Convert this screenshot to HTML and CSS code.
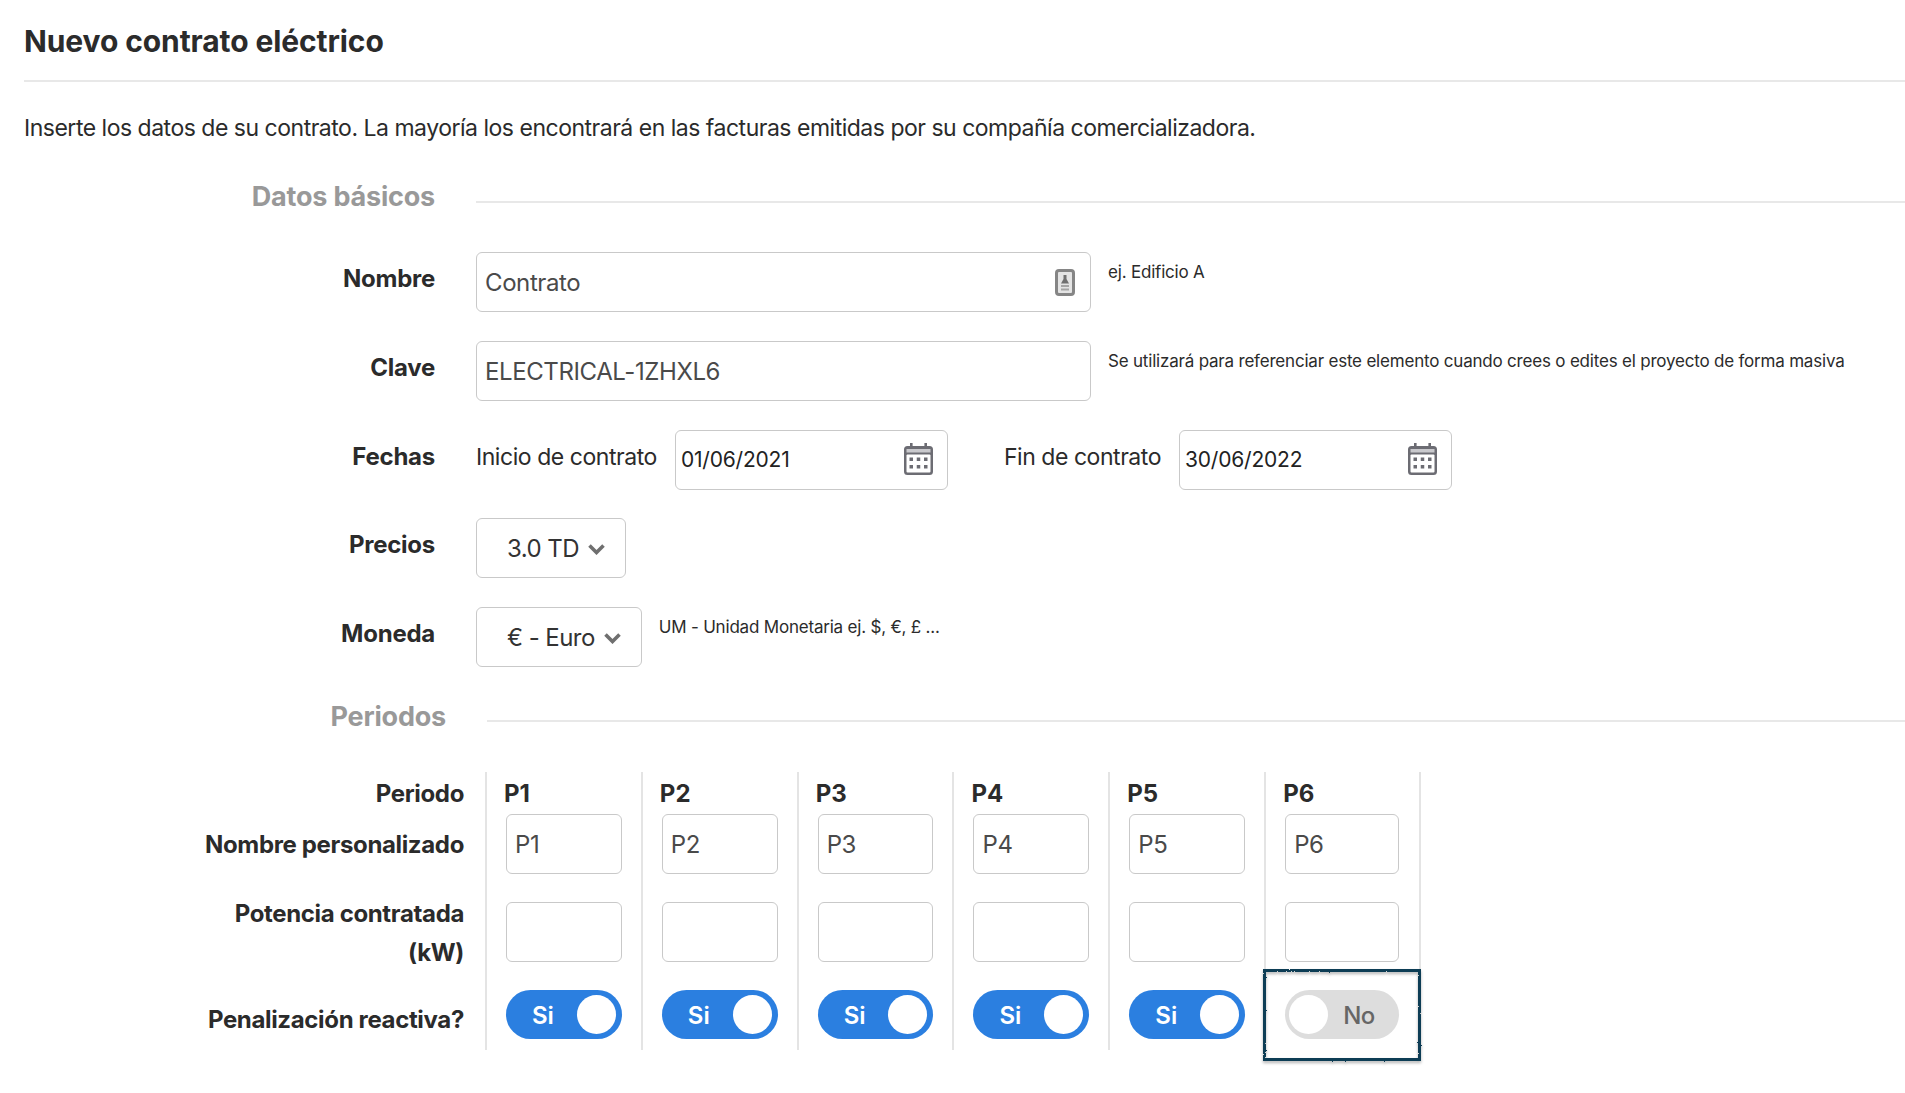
FILE: index.html
```html
<!DOCTYPE html>
<html lang="es">
<head>
<meta charset="utf-8">
<title>Nuevo contrato eléctrico</title>
<link rel="stylesheet" href="styles.css">
</head>
<body>
<svg class="defs" width="0" height="0" aria-hidden="true">
  <defs>
    <filter id="rough" filterUnits="userSpaceOnUse" x="-6" y="-6" width="176" height="110">
      <feTurbulence type="fractalNoise" baseFrequency="0.9" numOctaves="2" seed="4" result="noise"/>
      <feDisplacementMap in="SourceGraphic" in2="noise" scale="2" xChannelSelector="R" yChannelSelector="G" result="rough"/>
      <feDropShadow in="rough" dx="0" dy="2" stdDeviation="1.500" flood-color="#000" flood-opacity="0.3"/>
    </filter>
    <symbol id="cal" viewBox="0 0 29 32">
      <path fill="#6c6c73" d="M6 0h2.600v3h11.800V0H23v3h2.500A3.500 3.500 0 0 1 29 6.500V28.500A3.500 3.500 0 0 1 25.500 32H3.500A3.500 3.500 0 0 1 0 28.500V6.500A3.500 3.500 0 0 1 3.500 3H6z"/>
      <rect x="2.500" y="6" width="24" height="3.500" fill="#c9c9cd"/>
      <rect x="2.500" y="11.500" width="24" height="18" rx="1" fill="#fff"/>
      <g fill="#6c6c73">
        <rect x="5.500" y="14.500" width="3.500" height="3.500"/><rect x="12.750" y="14.500" width="3.500" height="3.500"/><rect x="20" y="14.500" width="3.500" height="3.500"/>
        <rect x="5.500" y="22" width="3.500" height="3.500"/><rect x="12.750" y="22" width="3.500" height="3.500"/><rect x="20" y="22" width="3.500" height="3.500"/>
      </g>
    </symbol>
    <symbol id="chev" viewBox="0 0 17 12">
      <path fill="none" stroke="#6f6f6f" stroke-width="3.600" d="M1.500 2.500L8.500 9.500L15.500 2.500"/>
    </symbol>
  </defs>
</svg>
<main class="page">
  <h1 class="title">Nuevo contrato eléctrico</h1>
  <p class="intro">Inserte los datos de su contrato. La mayoría los encontrará en las facturas emitidas por su compañía comercializadora.</p>

  <section class="section section-basic">
    <h2 class="section-title">Datos básicos</h2>
    <div class="section-line"></div>
  </section>

  <div class="rows">
    <div class="row">
      <label class="row-label">Nombre</label>
      <div class="field field-wide">
        <input class="input" value="Contrato">
        <svg class="contact-icon" width="20" height="27" viewBox="0 0 20 27" aria-hidden="true">
          <rect x="1.500" y="1.500" width="17" height="24" rx="2.500" fill="#e4e4e4" stroke="#858585" stroke-width="3"/>
          <path fill="#707070" d="M8.500 6h3v4l2.500 4.500H6L8.500 10z"/>
          <rect x="6" y="16" width="8" height="2" fill="#a5a5a5"/>
          <rect x="6" y="19.500" width="8" height="2" fill="#a5a5a5"/>
        </svg>
      </div>
      <span class="help">ej. Edificio A</span>
    </div>
    <div class="row">
      <label class="row-label">Clave</label>
      <div class="field field-wide"><input class="input" value="ELECTRICAL-1ZHXL6"></div>
      <span class="help">Se utilizará para referenciar este elemento cuando crees o edites el proyecto de forma masiva</span>
    </div>
    <div class="row">
      <label class="row-label">Fechas</label>
      <span class="date-label">Inicio de contrato</span>
      <div class="field field-date">
        <input class="input input-date" value="01/06/2021">
        <svg class="cal-icon" width="29" height="32" aria-hidden="true"><use href="#cal"/></svg>
      </div>
      <span class="date-label date-label-end">Fin de contrato</span>
      <div class="field field-date">
        <input class="input input-date" value="30/06/2022">
        <svg class="cal-icon" width="29" height="32" aria-hidden="true"><use href="#cal"/></svg>
      </div>
    </div>
    <div class="row">
      <label class="row-label">Precios</label>
      <div class="select"><span>3.0 TD</span><svg width="17" height="12" aria-hidden="true"><use href="#chev"/></svg></div>
    </div>
    <div class="row">
      <label class="row-label">Moneda</label>
      <div class="select"><span>€ - Euro</span><svg width="17" height="12" aria-hidden="true"><use href="#chev"/></svg></div>
      <span class="help">UM - Unidad Monetaria ej. $, €, £ ...</span>
    </div>
  </div>

  <section class="section section-periods">
    <h2 class="section-title">Periodos</h2>
    <div class="section-line"></div>
  </section>

  <div class="periods">
    <div class="period-labels">
      <div class="pl pl-head">Periodo</div>
      <div class="pl pl-name">Nombre personalizado</div>
      <div class="pl pl-power">Potencia contratada<br>(kW)</div>
      <div class="pl pl-react">Penalización reactiva?</div>
    </div>
    <div class="period">
      <div class="period-head">P1</div>
      <input class="input" value="P1">
      <input class="input">
      <div class="toggle on"><span>Si</span><i></i></div>
    </div>
    <div class="period">
      <div class="period-head">P2</div>
      <input class="input" value="P2">
      <input class="input">
      <div class="toggle on"><span>Si</span><i></i></div>
    </div>
    <div class="period">
      <div class="period-head">P3</div>
      <input class="input" value="P3">
      <input class="input">
      <div class="toggle on"><span>Si</span><i></i></div>
    </div>
    <div class="period">
      <div class="period-head">P4</div>
      <input class="input" value="P4">
      <input class="input">
      <div class="toggle on"><span>Si</span><i></i></div>
    </div>
    <div class="period">
      <div class="period-head">P5</div>
      <input class="input" value="P5">
      <input class="input">
      <div class="toggle on"><span>Si</span><i></i></div>
    </div>
    <div class="period period-last">
      <div class="period-head">P6</div>
      <input class="input" value="P6">
      <input class="input">
      <div class="toggle off"><i></i><span>No</span></div>
      <svg class="highlight" width="158" height="92" aria-hidden="true">
        <rect class="highlight-frame" x="1.500" y="1.500" width="155" height="89" filter="url(#rough)"/>
      </svg>
    </div>
  </div>
</main>
</body>
</html>
```
FILE: styles.css
```css
* { box-sizing: border-box; }
html, body { margin: 0; padding: 0; background: #fff; }
body {
  font-family: Inter, "Liberation Sans", sans-serif;
  color: #2b2b2b;
}
.defs { position: absolute; }
.page { min-height: 100vh; padding: 21px 0 0 24px; }

.title {
  margin: 0;
  font-size: 30px;
  line-height: 40px;
  font-weight: 700;
  letter-spacing: -0.1px;
  padding-bottom: 19px;
  border-bottom: 2px solid #e8e8e8;
}
.intro {
  margin: 28px 0 0;
  font-size: 23px;
  line-height: 36px;
  font-weight: 400;
  letter-spacing: -0.49px;
}

.section { display: flex; gap: 41px; }
.section-basic { margin-top: 32px; }
.section-periods { margin-top: 32px; }
.section-title {
  margin: 0;
  font-size: 27px;
  line-height: 36px;
  font-weight: 700;
  color: #999;
  text-align: right;
  letter-spacing: -0.2px;
}
.section-basic .section-title { width: 411px; padding-top: 1px; }
.section-periods .section-title { width: 422px; }
.section-line { flex: 1; height: 2px; background: #e8e8e8; margin-top: 23px; }
.section-periods .section-line { margin-top: 21px; }

.rows { margin-top: 37px; display: flex; flex-direction: column; gap: 28.75px; }
.row { display: flex; align-items: flex-start; }
.row-label {
  flex: none;
  width: 411px;
  margin-right: 41px;
  padding-top: 9px;
  font-size: 24px;
  line-height: 36px;
  font-weight: 700;
  letter-spacing: -0.25px;
  text-align: right;
}
.field { position: relative; flex: none; }
.field-wide { width: 615px; }
.field-date { width: 273px; }
.input {
  display: block;
  width: 100%;
  height: 60px;
  padding: 1px 8px 0;
  border: 1px solid #c9c9c9;
  border-radius: 6px;
  background: #fff;
  font-family: inherit;
  font-size: 24px;
  letter-spacing: -0.4px;
  color: #4a4a4a;
  outline: none;
}
.input-date { padding: 0 5px; font-size: 21px; letter-spacing: -0.2px; color: #222; }
.contact-icon { position: absolute; right: 16px; top: 17px; }
.cal-icon { position: absolute; right: 15px; top: 13px; }
.help {
  margin-left: 17px;
  padding-top: 8px;
  font-size: 17px;
  line-height: 24px;
  letter-spacing: -0.2px;
  white-space: nowrap;
}
.date-label {
  flex: none;
  margin-right: 18px;
  padding-top: 9px;
  font-size: 23px;
  line-height: 36px;
  letter-spacing: -0.45px;
}
.date-label-end { margin-left: 56px; }
.select {
  display: flex;
  align-items: center;
  gap: 9px;
  height: 60px;
  padding: 1px 20px 0 30px;
  border: 1px solid #c9c9c9;
  border-radius: 6px;
  font-size: 24px;
  letter-spacing: -0.55px;
  color: #333;
}

.periods { margin-top: 37px; display: flex; align-items: stretch; }
.period-labels {
  flex: none;
  width: 440px;
  margin-right: 21px;
  text-align: right;
  font-size: 24px;
  font-weight: 700;
  letter-spacing: -0.35px;
  line-height: 39px;
}
.pl-head { height: 42px; padding-top: 2px; }
.pl-name { height: 77px; padding-top: 11px; }
.pl-power { height: 99px; padding-top: 3px; }
.pl-react { padding-top: 10px; }

.period {
  flex: none;
  width: 155.83px;
  height: 278px;
  position: relative;
  border-left: 2px solid #e4e4e4;
  padding: 0 19px;
  display: flex;
  flex-direction: column;
  gap: 28px;
}
.period-last { width: 157px; padding: 0 20px 0 19px; border-right: 2px solid #e4e4e4; }
.period-head {
  height: 42px;
  margin: 0 0 -28px -2px;
  font-size: 24px;
  font-weight: 700;
  line-height: 44px;
}
.toggle {
  display: flex;
  align-items: center;
  flex: none;
  height: 49px;
  border-radius: 25px;
  font-size: 24px;
}
.toggle span { padding-top: 1px; }
.toggle i { display: block; width: 39px; height: 39px; border-radius: 50%; background: #fff; }
.toggle.on { background: #2b7fe0; color: #fff; font-weight: 600; justify-content: space-between; padding: 0 6px 0 26px; }
.toggle.off { background: #ddd; color: #666; font-weight: 500; letter-spacing: -0.5px; padding: 0 0 0 4px; gap: 15px; }
.highlight {
  position: absolute;
  left: -3px;
  top: 197px;
  overflow: visible;
  pointer-events: none;
}
.highlight-frame { fill: none; stroke: #0c3c54; stroke-width: 3; }
```
